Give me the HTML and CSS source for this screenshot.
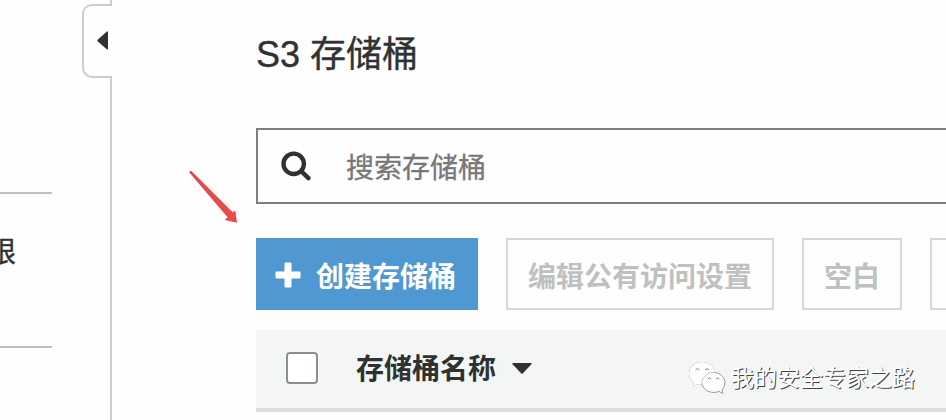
FILE: index.html
```html
<!DOCTYPE html>
<html lang="zh-CN">
<head>
<meta charset="utf-8">
<title>S3 存储桶</title>
<link rel="stylesheet" href="styles.css">
</head>
<body>
<aside class="sidebar">
  <div class="nav-section"></div>
  <div class="nav-section nav-item"><span>限</span></div>
</aside>
<div class="divider">
  <div class="divider-top"></div>
  <button class="collapse" aria-label="collapse"><svg width="11" height="19" viewBox="0 0 11 19"><path d="M10 .4Q11 .2 11 1.4V17.6Q11 18.8 10 18.4L.6 10.3Q0 9.5 .6 8.7Z" fill="#2f3231"/></svg></button>
  <div class="divider-line"></div>
</div>
<main>
  <h1>S3 存储桶</h1>
  <div class="search">
    <svg width="30" height="30" viewBox="0 0 30 30" fill="none" stroke="#2f3231"><circle cx="12.7" cy="12.8" r="10.2" stroke-width="4.4"/><path d="M20.2 20.2l7.2 7" stroke-width="4.4" stroke-linecap="round"/></svg>
    <span>搜索存储桶</span>
  </div>
  <div class="actions">
    <button class="btn primary"><svg width="26" height="26" viewBox="0 0 26 26"><path d="M10.500 .5h5q1 0 1 1v8h8q1 0 1 1v5q0 1-1 1h-8v8q0 1-1 1h-5q-1 0-1-1v-8h-8q-1 0-1-1v-5q0-1 1-1h8v-8q0-1 1-1z" fill="#fff"/></svg><span>创建存储桶</span></button>
    <button class="btn edit">编辑公有访问设置</button>
    <button class="btn empty">空白</button>
    <button class="btn more"></button>
  </div>
  <div class="table-head">
    <span class="check"></span>
    <span class="name">存储桶名称</span>
    <svg class="caret" width="20" height="11" viewBox="0 0 20 11"><path d="M1 0H19Q20 .3 19.4 1.2L10.7 10.5Q10 11 9.3 10.5L.6 1.2Q0 .3 1 0Z" fill="#2f3231"/></svg>
  </div>
</main>
<svg class="arrow" width="50" height="54" viewBox="0 0 50 54"><path d="M.3 2.400Q.6 .5 2.400 1.100L43.900 42.400L46.200 40.300L48 52.800L35.700 50L38.600 47.300Z" fill="#ea4849"/></svg>
<div class="watermark">
  <svg class="wechat" width="38" height="34" viewBox="0 0 38 34"><g fill="#fdfefe"><path d="M14 1C6.500 1 1 5.800 1 12.500c0 4 2 6.800 5 9L5 25.500l5-2.500q4 1 7 .3C28 22 27 14 26.700 10.500C25.500 5 20.500 1 14 1Z"/><path class="front" d="M25.500 11.500c-6 0-11.500 4.500-11.500 9.800s5 10 11.500 10q3 0 5.300-1l4 2-1-3.500c2-1.800 3-4.400 3-7.300 0-5.500-5-10-11.300-10z"/></g><g fill="none" stroke="#777" stroke-width=".9"><path d="M7.500 9q2-3 4 0M17 9q2-3 4 0M19.800 18q1.700-2.500 3.400 0M28 18q1.700-2.500 3.400 0"/></g></svg>
  <span>我的安全专家之路</span>
</div>
</body>
</html>
```

FILE: styles.css
```css
* { box-sizing: border-box; }
body {
  margin: 0;
  width: 946px;
  height: 420px;
  display: flex;
  position: relative;
  overflow: hidden;
  background: #fefefe;
  color: #2f3231;
  font-family: "Liberation Sans", "Noto Sans CJK SC", sans-serif;
}
button { padding: 0; font-family: inherit; }
svg { display: block; flex: none; }

.sidebar { width: 82px; flex: none; overflow: hidden; }
.nav-section { width: 52px; height: 194px; border-bottom: 2px solid #bfbfbf; }
.nav-item { height: 154px; padding-top: 38px; font-size: 28px; line-height: 42px; -webkit-text-stroke: .4px #2f3231; }
.nav-item span { display: block; margin-left: -12px; }

.divider { width: 30px; flex: none; display: flex; flex-direction: column; align-items: flex-end; }
.divider-top { width: 2px; height: 4px; background: #ccc; }
.divider-line { width: 2px; flex: 1; background: #ccc; }
.collapse {
  width: 30px;
  height: 74px;
  padding: 0 4px 2px 0;
  display: flex;
  align-items: center;
  justify-content: flex-end;
  background: none;
  border: 2px solid #ccc;
  border-right: 0;
  border-radius: 10px 0 0 10px;
}

main { flex: 1; min-width: 0; padding: 29px 0 0 144px; }
h1 { margin: 0 0 47px; font-size: 36px; line-height: 52px; font-weight: 400; white-space: nowrap; -webkit-text-stroke: .4px #2f3231; }
.search {
  height: 76px;
  padding-left: 23px;
  display: flex;
  align-items: center;
  gap: 35px;
  border: 2px solid #7f7f7f;
  border-right: 0;
  color: #777;
  font-size: 28px;
}
.search span { -webkit-text-stroke: .3px #777; }
.actions { display: flex; gap: 28px; margin-top: 34px; overflow: hidden; }
.btn {
  flex: none;
  height: 72px;
  padding-top: 2px;
  border: 2px solid #d5d6d6;
  background: none;
  color: #bfc0c0;
  font-size: 28px;
  font-weight: 700;
  white-space: nowrap;
}
.primary {
  width: 222px;
  padding-left: 17px;
  display: flex;
  align-items: center;
  gap: 15px;
  background: #5098d2;
  border-color: #5098d2;
  color: #fff;
}
.edit { width: 268px; }
.empty { width: 100px; }
.more { width: 120px; }
.table-head {
  height: 82px;
  margin-top: 20px;
  padding: 0 0 2px 30px;
  display: flex;
  align-items: center;
  background: #f4f6f6;
  border-bottom: 4px solid #dcdcdc;
  font-size: 28px;
  font-weight: 700;
}
.check { width: 32px; height: 32px; border: 2px solid #899094; border-radius: 4px; background: #fff; }
.name { margin: -2px 0 0 38px; }
.caret { margin-left: 16px; }

.arrow { position: absolute; left: 189px; top: 170px; }
.watermark {
  position: absolute;
  left: 688px;
  top: 361px;
  display: flex;
  align-items: center;
  gap: 5px;
  color: #fff;
  font-size: 23px;
  line-height: 34px;
  text-shadow: 1px 1px 0 #444;
  white-space: nowrap;
}
.wechat { overflow: visible; filter: drop-shadow(.5px .7px 0 #666); }
.front { stroke: #999; stroke-width: .6px; }
```
